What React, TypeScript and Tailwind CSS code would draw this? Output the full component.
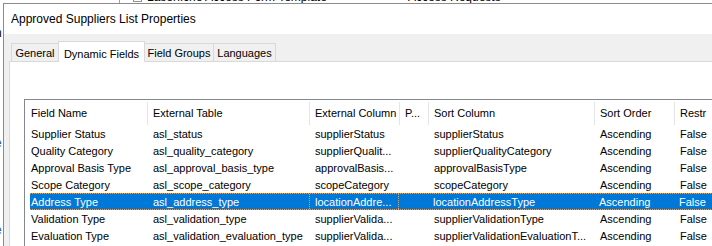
const rows = [
  ['Supplier Status', 'asl_status', 'supplierStatus', '', 'supplierStatus', 'Ascending', 'False'],
  ['Quality Category', 'asl_quality_category', 'supplierQualit...', '', 'supplierQualityCategory', 'Ascending', 'False'],
  ['Approval Basis Type', 'asl_approval_basis_type', 'approvalBasis...', '', 'approvalBasisType', 'Ascending', 'False'],
  ['Scope Category', 'asl_scope_category', 'scopeCategory', '', 'scopeCategory', 'Ascending', 'False'],
  ['Address Type', 'asl_address_type', 'locationAddre...', '', 'locationAddressType', 'Ascending', 'False'],
  ['Validation Type', 'asl_validation_type', 'supplierValida...', '', 'supplierValidationType', 'Ascending', 'False'],
  ['Evaluation Type', 'asl_validation_evaluation_type', 'supplierValida...', '', 'supplierValidationEvaluationT...', 'Ascending', 'False'],
]

const headers = ['Field Name', 'External Table', 'External Column', 'P...', 'Sort Column', 'Sort Order', 'Restr']
const widths = ['w-[123px]', 'w-[162px]', 'w-[90px]', 'w-[29px]', 'w-[166px]', 'w-[80px]', 'w-[80px]']
const selected = 4

function Tab({ label, width, active }: { label: string; width: string; active?: boolean }) {
  if (active) {
    return (
      <div className={`${width} relative z-10 -ml-px -mb-px h-[21px] flex justify-center items-start pt-[4px] bg-white border-t border-l border-r border-[#d9d9d9] whitespace-nowrap`}>
        {label}
      </div>
    )
  }
  return (
    <div className={`${width} -ml-px first:ml-0 h-[18px] flex justify-center items-center pt-px bg-[#f0f0f0] border-t border-l border-r border-[#d9d9d9] whitespace-nowrap`}>
      {label}
    </div>
  )
}

export default function App() {
  return (
    <div className="relative w-[712px] h-[246px] overflow-hidden bg-white text-black font-['Liberation_Sans',Arial,sans-serif] text-[11px]">
      {/* window behind the dialog */}
      <div className="absolute inset-0">
        <div className="absolute left-[119px] top-0 w-px h-[4px] bg-[#a0a0a0]" />
        <div className="absolute left-[133px] top-[-7px] w-[9px] h-[9px] border border-[#919191]" />
        <div className="absolute left-[147px] top-[-12px] text-[12px] whitespace-nowrap">Laserfiche Access Form Template</div>
        <div className="absolute left-[408px] top-[-12px] text-[12px] whitespace-nowrap">Access Requests</div>
        <div className="absolute left-[-5px] top-[24px] text-[12px]">n</div>
        <div className="absolute left-[-4px] top-[114px] text-[12px] text-[#8a4a2a]">i</div>
        <div className="absolute left-[-5px] top-[134px] text-[12px] text-[#2a5a9a]">e</div>
        <div className="absolute left-[-5px] top-[221px] text-[12px] text-[#2a5a9a]">e</div>
      </div>

      {/* dialog window */}
      <div className="absolute left-[3px] top-[3px] w-[740px] h-[260px] flex flex-col border-l border-t border-[#8c8c8c] bg-[#f0f0f0]">
        <div className="h-[30px] shrink-0 bg-white flex items-center pl-[7px] text-[12px]">
          Approved Suppliers List Properties
        </div>

        <div className="flex-1 flex flex-col pl-[5px] pt-[7px]">
          <div className="flex items-end h-[20px] pl-[2px]">
            <Tab label="General" width="w-[48px]" />
            <Tab label="Dynamic Fields" width="w-[87px]" active />
            <Tab label="Field Groups" width="w-[70px]" />
            <Tab label="Languages" width="w-[63px]" />
          </div>

          <div className="flex-1 bg-white border-t border-l border-[#d9d9d9] pl-[14px] pt-[37px]">
            <div className="h-full border-t border-l border-[#828790] bg-white">
              <div className="flex h-[25px]">
                {headers.map((h, i) => (
                  <div key={h} className={`${widths[i]} shrink-0 flex overflow-hidden`}>
                    <span className={`flex-1 flex items-center pt-px whitespace-nowrap overflow-hidden ${i === 0 ? 'pl-[6px]' : 'pl-[5px]'}`}>
                      {h}
                    </span>
                    <span className="w-px h-[23px] self-end bg-[#e5e5e5]" />
                  </div>
                ))}
              </div>

              {rows.map((r, ri) => {
                const sel = ri === selected
                return (
                  <div
                    key={ri}
                    className={`relative flex ml-[5px] h-[17px] leading-[16px] ${sel ? 'bg-[#0078d7] text-white border-y border-dotted border-[#f0a050]' : 'border-y border-transparent'}`}
                  >
                    {r.map((c, ci) => (
                      <div
                        key={ci}
                        className={`${ci === 0 ? 'w-[118px] pl-[1px]' : widths[ci] + ' pl-[5px]'} shrink-0 whitespace-nowrap overflow-hidden ${sel && ci === 2 ? 'border-x border-dotted border-[#f0a050] -ml-px' : ''}`}
                      >
                        {c}
                      </div>
                    ))}
                  </div>
                )
              })}
            </div>
          </div>
        </div>
      </div>
    </div>
  )
}
